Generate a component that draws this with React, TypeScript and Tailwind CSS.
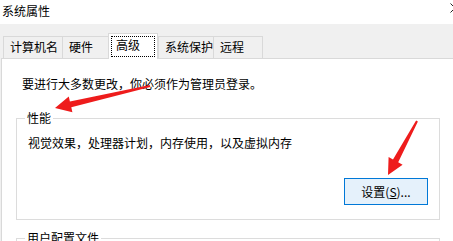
const font = { fontFamily: '"Noto Sans CJK SC", "Microsoft YaHei", sans-serif' }

function Tab({ label, width, last }: { label: string; width: string; last?: boolean }) {
  return (
    <div
      className={`${width} h-[22px] border-t border-l border-[#d9d9d9] bg-[#f0f0f0] pl-[6px] pt-[2px] leading-[16px] ${
        last ? 'border-r' : ''
      }`}
    >
      {label}
    </div>
  )
}

function GroupBox({ title, children }: { title: string; children?: React.ReactNode }) {
  return (
    <fieldset className="w-[424px] border border-[#dcdcdc] px-[11px]">
      <legend className="ml-[-3px] px-[2px] leading-[16px]">{title}</legend>
      {children}
    </fieldset>
  )
}

export default function App() {
  return (
    <div
      className="relative h-[241px] w-[453px] overflow-hidden bg-[#f0f0f0] text-[12px] text-black"
      style={font}
    >
      {/* Title bar */}
      <div className="relative h-[24px] bg-white pl-[2px] pt-[3px] leading-[16px]">
        系统属性
        <svg className="absolute left-[450px] top-[3px]" width="10" height="10" viewBox="0 0 10 10">
          <path d="M0.5 0.5 L9.5 9.5 M9.5 0.5 L0.5 9.5" stroke="#222" strokeWidth="1" fill="none" />
        </svg>
      </div>

      {/* Tabs */}
      <div className="flex h-[34px] items-end pl-[3px]">
        <Tab label="计算机名" width="w-[59px]" />
        <Tab label="硬件" width="w-[46px]" />
        <div className="relative z-10 -mb-px h-[26px] w-[50px] border-x border-t border-[#d9d9d9] bg-white p-[2px]">
          <div className="h-[21px] border border-dotted border-black pl-[4px] leading-[16px]">高级</div>
        </div>
        <Tab label="系统保护" width="w-[55px]" />
        <Tab label="远程" width="w-[50px]" last />
      </div>

      {/* Tab page */}
      <div className="ml-[1px] h-[200px] border-t border-l border-[#d9d9d9] bg-white pl-[14px] pt-[17px]">
        <p className="ml-[6px] leading-[16px]">要进行大多数更改，你必须作为管理员登录。</p>

        <div className="mt-[18px]">
          <GroupBox title="性能">
            <p className="mt-[9px] leading-[16px]">视觉效果，处理器计划，内存使用，以及虚拟内存</p>
            <div className="mt-[27px] mb-[14px] flex justify-end">
              <button className="h-[27px] w-[84px] border border-[#0078d7] bg-[#e5f1fb] leading-[16px]">
                设置(<span className="underline">S</span>)...
              </button>
            </div>
          </GroupBox>
        </div>

        <div className="mt-[10px]">
          <GroupBox title="用户配置文件">
            <div className="h-[40px]" />
          </GroupBox>
        </div>
      </div>

      {/* Annotation arrows */}
      <svg className="pointer-events-none absolute left-0 top-0" width="453" height="241">
        <polygon
          points="149.8,85 69.9,101.5 68.8,96.6 55,108 72.4,112.2 71.3,107.3 150.2,87"
          fill="#ee1c1c"
        />
        <polygon
          points="416.1,120.5 393,159.5 388.6,157.1 388,175 402.6,164.7 398.2,162.3 417.9,121.5"
          fill="#ee1c1c"
        />
      </svg>
    </div>
  )
}
